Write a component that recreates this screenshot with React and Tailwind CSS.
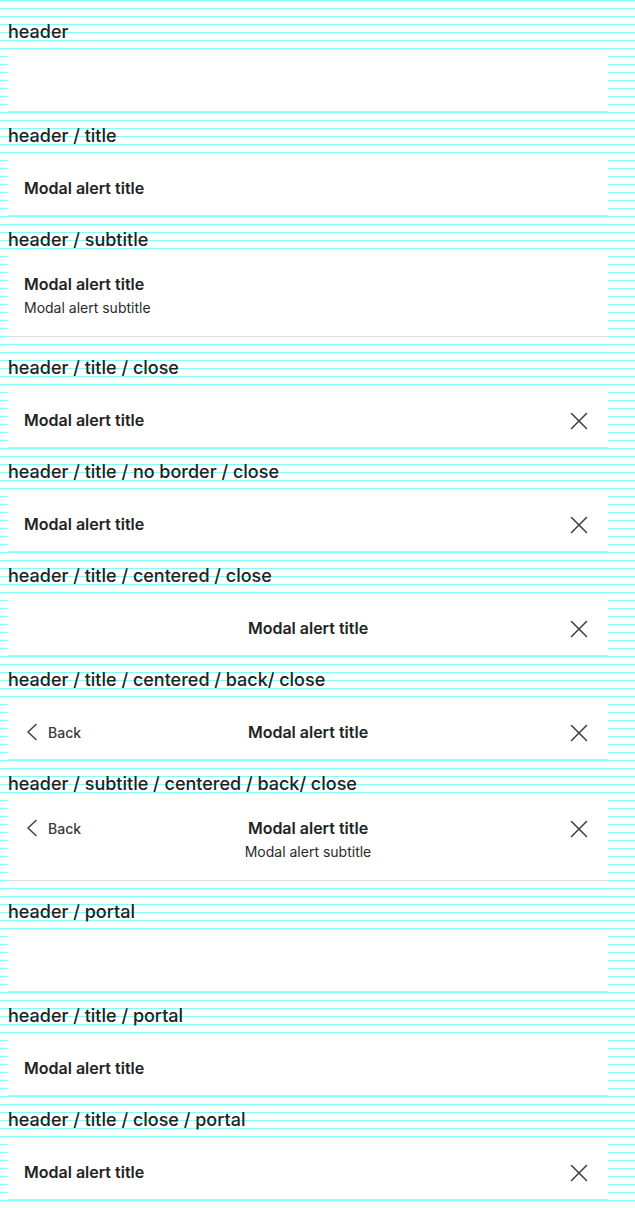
const stripes =
  'bg-[image:repeating-linear-gradient(to_bottom,#80ffff_0px,#80ffff_1px,transparent_1px,transparent_8px)]';

const sections = [
  { label: 'header' },
  { label: 'header / title', title: true },
  { label: 'header / subtitle', title: true, subtitle: true },
  { label: 'header / title / close', title: true, close: true },
  { label: 'header / title / no border / close', title: true, close: true, noBorder: true },
  { label: 'header / title / centered / close', title: true, close: true, centered: true },
  { label: 'header / title / centered / back/ close', title: true, close: true, centered: true, back: true },
  { label: 'header / subtitle / centered / back/ close', title: true, subtitle: true, close: true, centered: true, back: true },
  { label: 'header / portal' },
  { label: 'header / title / portal', title: true },
  { label: 'header / title / close / portal', title: true, close: true },
];

const CloseIcon = () => (
  <div className="h-6 flex items-center mt-px mr-[3px]">
    <svg width="20" height="20" viewBox="0 0 20 20" fill="none" stroke="#3d3d3d" strokeWidth="1.5" strokeLinecap="round">
      <path d="M2.5 2.5l15 15M17.5 2.5l-15 15" />
    </svg>
  </div>
);

const BackButton = () => (
  <button className="h-6 flex items-center text-[14px] font-medium text-[#3a3a3a]">
    <svg width="12" height="18" viewBox="0 0 12 18" fill="none" stroke="#3d3d3d" strokeWidth="1.5" strokeLinecap="round" strokeLinejoin="round" className="ml-[2px]">
      <path d="M10 1.5L2 9l8 7.5" />
    </svg>
    <span className="ml-[10px]">Back</span>
  </button>
);

const Title = ({ subtitle, centered }) => (
  <div className={centered ? 'flex flex-col items-center' : 'flex flex-col'}>
    <span className="text-[16px] leading-6 font-semibold text-[#222222]">Modal alert title</span>
    {subtitle && <span className="text-[14px] leading-6 text-[#2a2a2a]">Modal alert subtitle</span>}
  </div>
);

const HeaderPanel = ({ s }) => {
  const height = s.subtitle ? 'h-[88px]' : 'h-[63px]';

  return (
    <div className={`flex ${height} w-[600px] border-b border-[#dcdcdc] bg-white px-4 pt-[23px] items-start`}>
      {s.centered ? (
        <>
          <div className="w-[120px] flex items-center">{s.back && <BackButton />}</div>
          <div className="flex-1 flex justify-center">
            <Title subtitle={s.subtitle} centered />
          </div>
          <div className="w-[120px] flex justify-end">
            <CloseIcon />
          </div>
        </>
      ) : (
        <>
          <div className="flex-1">{s.title && <Title subtitle={s.subtitle} />}</div>
          {s.close && <CloseIcon />}
        </>
      )}
    </div>
  );
};

export default function App() {
  return (
    <div
      className={`w-[635px] min-h-[1208px] pt-2 pb-2 bg-white ${stripes}`}
      style={{ fontFamily: 'Inter, "Noto Sans", sans-serif' }}
    >
      {sections.map((s) => (
        <section key={s.label} className={s.subtitle ? 'h-[128px]' : 'h-[104px]'}>
          <div className={s.subtitle ? 'h-[33px] pt-3' : 'h-[41px] pt-3'}>
            <h2 className="pl-2 text-[18px] leading-6 font-medium text-[#222222]">{s.label}</h2>
          </div>
          <div className="pl-2">
            <HeaderPanel s={s} />
          </div>
        </section>
      ))}
    </div>
  );
}
